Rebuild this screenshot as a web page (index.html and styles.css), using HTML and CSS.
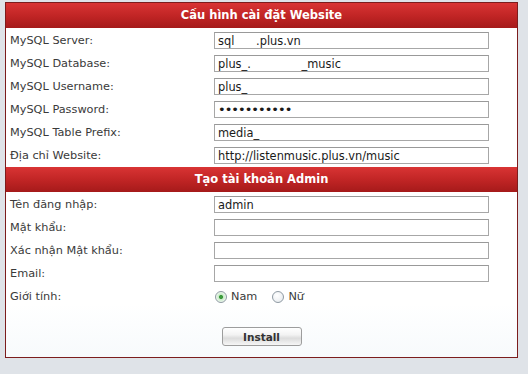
FILE: index.html
```html
<!DOCTYPE html>
<html lang="vi">
<head>
  <meta charset="utf-8">
  <title>Cài đặt Website</title>
  <link rel="stylesheet" href="styles.css">
</head>
<body>

<form class="setup" action="install.php" method="post">
  <div class="caption">Cấu hình cài đặt Website</div>

  <div class="row"><label>MySQL Server:</label><input type="text" name="db_host" value="sql      .plus.vn"></div>
  <div class="row"><label>MySQL Database:</label><input type="text" name="db_name" value="plus_.              _music"></div>
  <div class="row"><label>MySQL Username:</label><input type="text" name="db_user" value="plus_"></div>
  <div class="row"><label>MySQL Password:</label><input type="password" name="db_pass" value="12345678901"></div>
  <div class="row"><label>MySQL Table Prefix:</label><input type="text" name="db_prefix" value="media_"></div>
  <div class="row"><label>Địa chỉ Website:</label><input type="text" name="site_url" value="http://listenmusic.plus.vn/music"></div>

  <div class="caption second">Tạo tài khoản Admin</div>

  <div class="row"><label>Tên đăng nhập:</label><input type="text" name="admin_user" value="admin"></div>
  <div class="row"><label>Mật khẩu:</label><input type="password" name="admin_pass"></div>
  <div class="row"><label>Xác nhận Mật khẩu:</label><input type="password" name="admin_pass2"></div>
  <div class="row"><label>Email:</label><input type="text" name="admin_email"></div>
  <div class="row">
    <label>Giới tính:</label>
    <span class="choice"><input type="radio" name="sex" value="1" checked> Nam</span>
    <span class="choice"><input type="radio" name="sex" value="0"> Nữ</span>
  </div>

  <div class="actions">
    <button type="submit">Install</button>
  </div>
</form>

</body>
</html>
```
FILE: styles.css
```css
body {
  margin: 0;
  padding: 2px 0 0 5px;
  background-color: #dfe3e8;
  font-family: "DejaVu Sans", Verdana, sans-serif;
  font-size: 11.3px;
  color: #3a3a3a;
}

.setup {
  width: 511px;
  height: 354px;
  margin: 0;
  border: 1px solid #7c1d1d;
  background: linear-gradient(#ffffff 85%, #f7fafc);
}

.caption {
  height: 25px;
  line-height: 25px;
  text-align: center;
  color: #fff;
  font-weight: bold;
  font-size: 11.5px;
  background: linear-gradient(#d93434, #bf2424 55%, #a51a1a);
}

.caption.second {
  margin-top: 1px;
}

.row {
  display: flex;
  align-items: flex-start;
  height: 23px;
  box-sizing: border-box;
  padding-top: 4px;
}

.row label {
  width: 204px;
  padding-left: 4px;
  line-height: 17px;
}

.row input[type="text"],
.row input[type="password"] {
  width: 275px;
  height: 17px;
  margin: 0;
  padding: 0 3px;
  box-sizing: border-box;
  border: 1px solid #a7a7a7;
  border-top-color: #999;
  background: #fff;
  font-family: "DejaVu Sans", Verdana, sans-serif;
  font-size: 11.4px;
  line-height: 14px;
  color: #1a1a1a;
}

.row input[type="password"] {
  font-size: 13px;
  letter-spacing: -1px;
}

.choice {
  display: flex;
  align-items: center;
  height: 17px;
  margin-right: 14px;
  line-height: 17px;
}

.choice input {
  -webkit-appearance: none;
  appearance: none;
  width: 12px;
  height: 12px;
  margin: 1px 4px 0 1px;
  border: 1px solid #8f9aa3;
  border-radius: 50%;
  background: radial-gradient(circle at 40% 35%, #ffffff, #e4e8ec);
  box-sizing: border-box;
}

.choice input:checked {
  background: radial-gradient(circle, #3c9a3c 0, #3c9a3c 1.6px, #c8eac8 2.4px, #eef8ee 5px);
}

.actions {
  display: flex;
  justify-content: center;
  padding-top: 20px;
}

button {
  width: 80px;
  height: 19px;
  padding: 0;
  border: 1px solid #9d9d9d;
  border-radius: 3px;
  background: linear-gradient(#ffffff, #f3f3f3 40%, #dcdcdc 60%, #f6f6f6);
  font-family: "DejaVu Sans", Verdana, sans-serif;
  font-size: 10.5px;
  font-weight: bold;
  color: #333;
}
```
